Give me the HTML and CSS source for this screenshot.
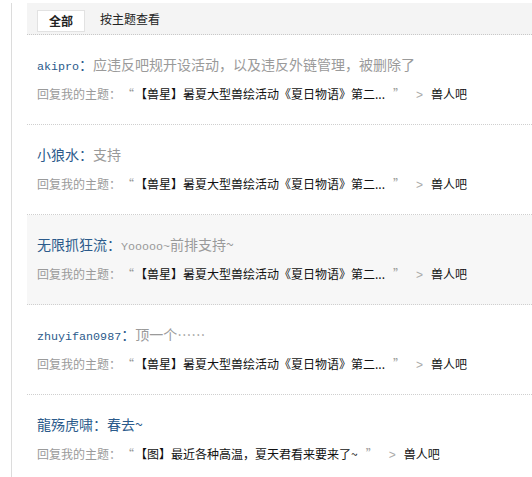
FILE: index.html
```html
<!DOCTYPE html>
<html>
<head>
<meta charset="utf-8">
<link rel="stylesheet" href="styles.css">
</head>
<body>
<div class="frame">
  <div class="main">
    <div class="tabs">
      <span class="tab active">全部</span>
      <span class="tab">按主题查看</span>
    </div>
    <ul class="feed">
      <li class="item">
        <div class="line1"><span class="user"><span class="en">akipro</span>：</span><span class="msg">应违反吧规开设活动，以及违反外链管理，被删除了</span></div>
        <div class="line2"><span class="label">回复我的主题：</span><span class="q">“</span><span class="title">【兽星】暑夏大型兽绘活动《夏日物语》第二...</span><span class="q close">”</span><span class="arrow">&gt;</span><span class="bar">兽人吧</span></div>
      </li>
      <li class="item">
        <div class="line1"><span class="user">小狼水：</span><span class="msg">支持</span></div>
        <div class="line2"><span class="label">回复我的主题：</span><span class="q">“</span><span class="title">【兽星】暑夏大型兽绘活动《夏日物语》第二...</span><span class="q close">”</span><span class="arrow">&gt;</span><span class="bar">兽人吧</span></div>
      </li>
      <li class="item shaded">
        <div class="line1"><span class="user">无限抓狂流：</span><span class="msg"><span class="en">Yooooo~</span>前排支持~</span></div>
        <div class="line2"><span class="label">回复我的主题：</span><span class="q">“</span><span class="title">【兽星】暑夏大型兽绘活动《夏日物语》第二...</span><span class="q close">”</span><span class="arrow">&gt;</span><span class="bar">兽人吧</span></div>
      </li>
      <li class="item">
        <div class="line1"><span class="user"><span class="en">zhuyifan0987</span>：</span><span class="msg">顶一个……</span></div>
        <div class="line2"><span class="label">回复我的主题：</span><span class="q">“</span><span class="title">【兽星】暑夏大型兽绘活动《夏日物语》第二...</span><span class="q close">”</span><span class="arrow">&gt;</span><span class="bar">兽人吧</span></div>
      </li>
      <li class="item">
        <div class="line1"><span class="user">龍殇虎啸：</span><span class="msg blue">春去~</span></div>
        <div class="line2"><span class="label">回复我的主题：</span><span class="q">“</span><span class="title">【图】最近各种高温，夏天君看来要来了~</span><span class="q close">”</span><span class="arrow">&gt;</span><span class="bar">兽人吧</span></div>
      </li>
    </ul>
  </div>
</div>
</body>
</html>
```

FILE: styles.css
```css
html, body {
  margin: 0;
  padding: 0;
  background: #fff;
}
body {
  font-family: "Noto Sans CJK SC", "Liberation Sans", sans-serif;
  font-size: 12px;
  color: #333;
}
.frame {
  padding-left: 11px;
}
.main {
  border-left: 1px solid #dcdcdc;
  padding-left: 15px;
  min-height: 477px;
  box-sizing: border-box;
}
.tabs {
  margin-top: 3px;
  height: 32px;
  background: #f4f4f4;
  border-bottom: 1px dotted #c8c8c8;
  display: flex;
  align-items: center;
  padding-left: 10px;
  box-sizing: border-box;
}
.tab {
  font-size: 12px;
  line-height: 20px;
  color: #222;
  padding: 0 11px;
  margin-right: 4px;
}
.tab.active {
  background: #fff;
  border: 1px solid #e2e2e2;
  font-weight: bold;
  padding: 0 11px;
  margin-top: 4px;
}
.feed {
  list-style: none;
  margin: 0;
  padding: 0;
}
.item {
  padding: 18px 0 19px 10px;
  border-bottom: 1px dotted #cfcfcf;
}
.item.shaded {
  background: #f7f7f7;
}
.line1 {
  font-size: 14px;
  line-height: 22px;
  height: 22px;
  overflow: hidden;
  white-space: nowrap;
}
.line2 {
  margin-top: 8px;
  font-size: 12px;
  line-height: 22px;
  height: 22px;
  overflow: hidden;
  white-space: nowrap;
}
.en {
  font-family: "Liberation Mono", "DejaVu Sans Mono", monospace;
  font-size: 11.7px;
  line-height: 1;
}
.user {
  color: #2b5a8b;
}
.msg {
  color: #9a9a9a;
}
.msg.blue {
  color: #2b5a8b;
}
.label {
  color: #9a9a9a;
}
.q {
  display: inline-block;
  width: 14px;
  text-align: center;
  color: #9a9a9a;
  font-size: 12px;
}
.q.close {
  width: 20px;
  text-align: right;
}
.title {
  color: #111;
}
.arrow {
  color: #aaa;
  margin: 0 8px 0 11px;
  font-family: "Liberation Sans", sans-serif;
}
.bar {
  color: #111;
}
```
